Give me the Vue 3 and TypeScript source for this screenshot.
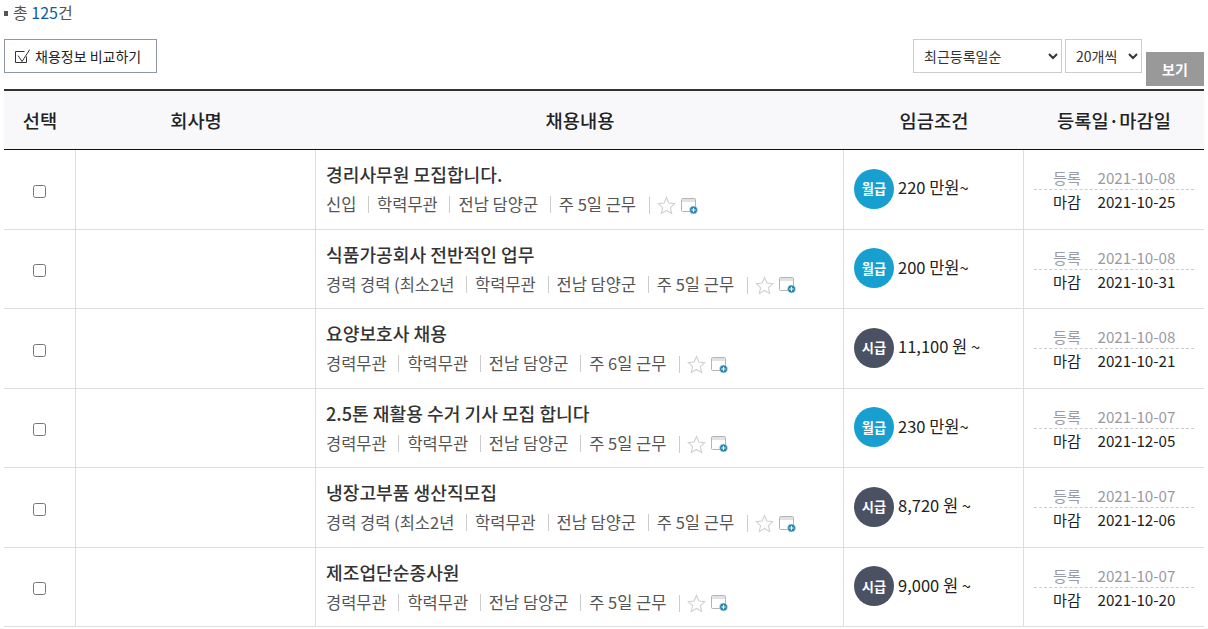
<script setup lang="ts">
type Job = {
  title: string
  career: string
  area: string
  days: string
  payType: '월급' | '시급'
  pay: string
  reg: string
  end: string
}

const jobs: Job[] = [
  { title: '경리사무원 모집합니다.', career: '신입', area: '전남 담양군', days: '주 5일 근무', payType: '월급', pay: '220 만원~', reg: '2021-10-08', end: '2021-10-25' },
  { title: '식품가공회사 전반적인 업무', career: '경력 경력 (최소2년', area: '전남 담양군', days: '주 5일 근무', payType: '월급', pay: '200 만원~', reg: '2021-10-08', end: '2021-10-31' },
  { title: '요양보호사 채용', career: '경력무관', area: '전남 담양군', days: '주 6일 근무', payType: '시급', pay: '11,100 원 ~', reg: '2021-10-08', end: '2021-10-21' },
  { title: '2.5톤 재활용 수거 기사 모집 합니다', career: '경력무관', area: '전남 담양군', days: '주 5일 근무', payType: '월급', pay: '230 만원~', reg: '2021-10-07', end: '2021-12-05' },
  { title: '냉장고부품 생산직모집', career: '경력 경력 (최소2년', area: '전남 담양군', days: '주 5일 근무', payType: '시급', pay: '8,720 원 ~', reg: '2021-10-07', end: '2021-12-06' },
  { title: '제조업단순종사원', career: '경력무관', area: '전남 담양군', days: '주 5일 근무', payType: '시급', pay: '9,000 원 ~', reg: '2021-10-07', end: '2021-10-20' }
]
</script>

<template>
  <div class="page">
    <p class="total"><i class="bullet"></i>총 <em>125</em>건</p>

    <div class="toolbar">
      <button class="compare" type="button">
        <svg width="15" height="15" viewBox="0 0 15 15" fill="none">
          <path d="M11.5 7.5v6h-11v-11h9" stroke="#333" stroke-width="1" />
          <path d="M3 6.5l4 6 7.8-12" stroke="#333" stroke-width="1" />
        </svg>
        채용정보 비교하기
      </button>
      <div class="sort">
        <select class="sel-order"><option>최근등록일순</option></select>
        <select class="sel-count"><option>20개씩</option></select>
        <button class="view" type="button">보기</button>
      </div>
    </div>

    <div class="list">
      <div class="row head">
        <div>선택</div>
        <div>회사명</div>
        <div>채용내용</div>
        <div>임금조건</div>
        <div>등록일·마감일</div>
      </div>
      <div v-for="job in jobs" :key="job.title" class="row item">
        <div class="cell-check"><input type="checkbox" /></div>
        <div></div>
        <div class="cell-job">
          <div class="job-title">{{ job.title }}</div>
          <div class="job-info">
            <span>{{ job.career }}</span>
            <span>학력무관</span>
            <span>{{ job.area }}</span>
            <span>{{ job.days }}</span>
            <span class="icons">
              <svg width="19" height="19" viewBox="0 0 19 19" fill="none">
                <path d="M9.5 1.5l2.4 5.5 5.9.6-4.4 4 1.3 5.9-5.2-3-5.2 3 1.3-5.9-4.4-4 5.9-.6z" stroke="#d0d0d0" stroke-width="1.1" />
              </svg>
              <svg width="17" height="16" viewBox="0 0 17 16" fill="none">
                <rect x="0.5" y="0.5" width="14" height="13" rx="1" fill="#fff" stroke="#b4b4b4" />
                <rect x="1" y="1" width="13" height="3" fill="#e2e2e2" />
                <circle cx="12.5" cy="12" r="4" fill="#1d7fa8" stroke="#dff0f6" stroke-width="0.6" />
                <path d="M10.3 12h4.4M12.5 9.8v4.4" stroke="#fff" stroke-width="1.2" />
              </svg>
            </span>
          </div>
        </div>
        <div class="cell-pay">
          <span class="badge" :class="job.payType === '월급' ? 'month' : 'hour'">{{ job.payType }}</span>
          <span class="pay">{{ job.pay }}</span>
        </div>
        <div class="cell-date">
          <div class="date reg"><span>등록</span><span>{{ job.reg }}</span></div>
          <div class="date"><span>마감</span><span>{{ job.end }}</span></div>
        </div>
      </div>
    </div>
  </div>
</template>

<style>
body {
  background: #fff;
  overflow: hidden;
}
</style>

<style scoped>
.page {
  padding: 0 4px;
  font-family: "Noto Sans CJK KR", "Noto Sans", sans-serif;
  color: #222;
}
.total {
  margin: 0;
  height: 39px;
  line-height: 25px;
  font-size: 16px;
  color: #555;
}
.total em {
  font-style: normal;
  color: #0f5ba8;
}
.bullet {
  display: inline-block;
  width: 4px;
  height: 5px;
  margin: 0 5px 2px 0;
  background: #555;
  vertical-align: middle;
}
.toolbar {
  display: flex;
  justify-content: space-between;
  height: 50px;
}
.compare {
  display: flex;
  align-items: center;
  gap: 5px;
  width: 153px;
  height: 34px;
  padding: 0 0 0 10px;
  background: #fff;
  border: 1px solid #8d97a8;
  font: inherit;
  font-size: 14px;
  color: #222;
}
.sort {
  display: flex;
  align-items: flex-start;
}
select {
  height: 34px;
  padding: 0 0 0 6px;
  background: #fff;
  border: 1px solid #ccc;
  border-radius: 0;
  font: inherit;
  font-size: 14px;
  color: #333;
}
.sel-order {
  width: 149px;
  margin-right: 3px;
}
.sel-count {
  width: 77px;
  margin-right: 4px;
}
.view {
  width: 58px;
  height: 34px;
  margin-top: 13px;
  background: #999;
  border: 0;
  font: inherit;
  font-size: 14px;
  font-weight: 700;
  color: #fff;
}
.list {
  border-top: 2px solid #333;
}
.row {
  display: grid;
  grid-template-columns: 72px 240px 528px 180px 1fr;
}
.head {
  box-sizing: border-box;
  height: 59px;
  padding-bottom: 2px;
  align-items: center;
  background: #f8f8fb;
  border-bottom: 1px solid #111;
  font-size: 18.7px;
  font-weight: 500;
  color: #222;
  text-align: center;
}
.item {
  box-sizing: border-box;
  height: 79.5px;
  border-bottom: 1px solid #ddd;
}
.item > div {
  display: flex;
  border-right: 1px solid #ddd;
}
.item > div:last-child {
  border-right: 0;
}
.cell-check {
  align-items: center;
  justify-content: center;
}
.cell-check input {
  width: 13px;
  height: 13px;
  margin: 4px 0 0;
}
.item > .cell-job {
  flex-direction: column;
  justify-content: center;
  padding: 0 0 1px 10px;
}
.job-title {
  font-size: 18.15px;
  font-weight: 500;
  line-height: 26px;
  color: #333;
}
.job-info {
  display: flex;
  align-items: center;
  margin-top: 5px;
  font-size: 16.5px;
  line-height: 24px;
  color: #555;
}
.job-info > span + span {
  position: relative;
  margin-left: 11.7px;
  padding-left: 9px;
}
.job-info > span + span::before {
  content: "";
  position: absolute;
  left: 0;
  top: 4px;
  height: 17px;
  width: 1px;
  background: #ccc;
}
.job-info > .icons {
  display: flex;
  align-items: center;
  gap: 5px;
  margin-left: 12.5px;
  padding-left: 8px;
  margin-top: 3px;
}
.job-info .icons::before {
  top: 1px;
}
.item > .cell-pay {
  align-items: center;
  padding: 0 0 1px 10px;
  gap: 4px;
  font-size: 16.5px;
  color: #222;
}
.pay {
  margin-bottom: 3px;
}
.badge {
  display: flex;
  align-items: center;
  justify-content: center;
  width: 40px;
  height: 40px;
  border-radius: 50%;
  font-size: 13.2px;
  font-weight: 700;
  color: #fff;
}
.month {
  background: #17a0cf;
}
.hour {
  background: #4a5163;
}
.item > .cell-date {
  flex-direction: column;
  justify-content: center;
  padding: 0 10px;
}
.date {
  display: flex;
  gap: 16.5px;
  padding-left: 19px;
  font-size: 15.2px;
  line-height: 22px;
  color: #222;
}
.date.reg {
  line-height: 23px;
  border-bottom: 1px dashed #ccc;
  color: #9a9aa5;
}
</style>
